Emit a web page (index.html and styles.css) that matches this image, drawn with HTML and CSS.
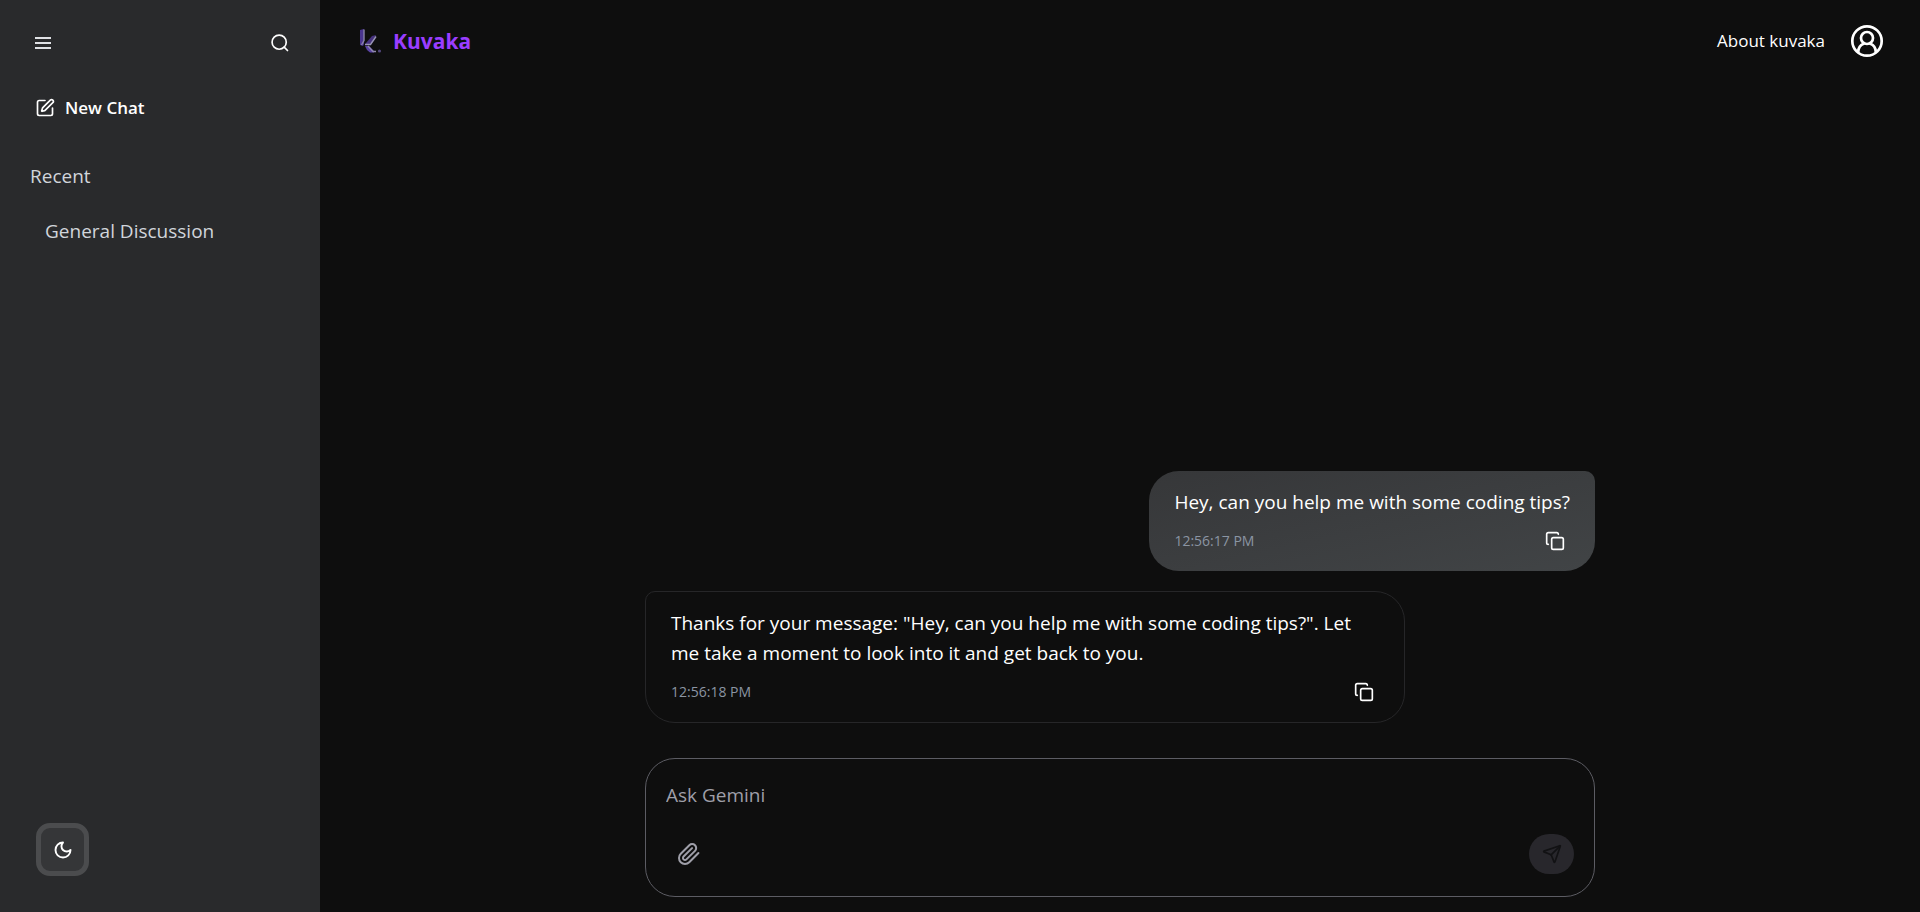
FILE: index.html
```html
<!DOCTYPE html>
<html lang="en">
<head>
<meta charset="utf-8">
<meta name="viewport" content="width=device-width, initial-scale=1">
<title>Kuvaka</title>
<link rel="stylesheet" href="styles.css">
</head>
<body class="app">
<aside class="sidebar">
  <div class="sidebar-top">
    <button class="icon-button" type="button" aria-label="Toggle menu">
      <svg width="22" height="22" viewBox="0 0 22 22" fill="none" stroke="#dfe1e5" stroke-width="2"><path d="M3 6h16M3 11h16M3 16h16"/></svg>
    </button>
    <button class="icon-button" type="button" aria-label="Search">
      <svg class="line" width="20" height="20" viewBox="0 0 24 24" stroke-width="2"><circle cx="11" cy="11" r="8.500"/><path d="m21 21-4-4"/></svg>
    </button>
  </div>
  <button class="new-chat" type="button">
    <svg class="line" width="20" height="20" viewBox="0 0 24 24" stroke-width="2"><path d="M12 3H5a2 2 0 0 0-2 2v14a2 2 0 0 0 2 2h14a2 2 0 0 0 2-2v-7"/><path d="M18.375 2.625a1 1 0 0 1 3 3l-9.013 9.014a2 2 0 0 1-.853.505l-2.873.84a.5.500 0 0 1-.62-.62l.84-2.873a2 2 0 0 1 .506-.852z"/></svg>
    New Chat
  </button>
  <h2 class="recent-title">Recent</h2>
  <nav class="recent-list">
    <a class="recent-link" href="#general">General Discussion</a>
  </nav>
  <button class="theme-button" type="button" aria-label="Switch theme">
    <svg class="line" width="20" height="20" viewBox="0 0 24 24" stroke-width="2.300"><path d="M12 3a6 6 0 0 0 9 9 9 9 0 1 1-9-9Z"/></svg>
  </button>
</aside>
<main class="main">
  <header class="header">
    <a class="brand" href="#home">
      <svg width="24" height="26" viewBox="0 0 24 26" aria-hidden="true">
        <path d="M1 2l4-1v15l-1 2-3-1z" fill="#4a3590"/>
        <path d="M5 1.500v11L2.500 17" fill="none" stroke="#8a84a8" stroke-width="1.400"/>
        <path d="M7 15l6-7 4-1-5 8-3 2H6z" fill="#46327f"/>
        <path d="M6 16.500h5.500L17 8.500" fill="none" stroke="#9a94b8" stroke-width="1.500"/>
        <path d="M6 18h4l5 5v1.500h-4L8 22z" fill="#5a43a5"/>
        <path d="M9 18l5 5.500h3" fill="none" stroke="#8f89ac" stroke-width="1.300"/>
        <circle cx="20.500" cy="23" r="1.600" fill="#51467a"/>
      </svg>
      <span>Kuvaka</span>
    </a>
    <div class="header-links">
      <a class="about" href="#about">About kuvaka</a>
      <button class="icon-button" type="button" aria-label="Account">
        <svg class="line" width="36" height="36" viewBox="0 0 24 24" stroke-width="1.800"><circle cx="12" cy="12" r="9.800"/><circle cx="12" cy="10" r="4"/><path d="M6.200 19.300V19a5.800 5.800 0 0 1 3.500-5.200M17.800 19.300V19a5.800 5.800 0 0 0-3.500-5.200"/></svg>
      </button>
    </div>
  </header>
  <section class="chat">
    <div class="messages">
      <article class="bubble bubble-user">
        <p class="text">Hey, can you help me with some coding tips?</p>
        <div class="meta">
          <time>12:56:17 PM</time>
          <button class="icon-button copy" type="button" aria-label="Copy message">
            <svg class="line" width="20" height="20" viewBox="0 0 24 24" stroke-width="2"><rect x="8" y="8" width="14" height="14" rx="2"/><path d="M4 16c-1.100 0-2-.9-2-2V4c0-1.100.9-2 2-2h10c1.100 0 2 .9 2 2"/></svg>
          </button>
        </div>
      </article>
      <article class="bubble bubble-bot">
        <p class="text">Thanks for your message: "Hey, can you help me with some coding tips?". Let me take a moment to look into it and get back to you.</p>
        <div class="meta">
          <time>12:56:18 PM</time>
          <button class="icon-button copy" type="button" aria-label="Copy message">
            <svg class="line" width="20" height="20" viewBox="0 0 24 24" stroke-width="2"><rect x="8" y="8" width="14" height="14" rx="2"/><path d="M4 16c-1.100 0-2-.9-2-2V4c0-1.100.9-2 2-2h10c1.100 0 2 .9 2 2"/></svg>
          </button>
        </div>
      </article>
    </div>
    <form class="composer">
      <input class="prompt" type="text" placeholder="Ask Gemini" aria-label="Ask Gemini">
      <div class="composer-actions">
        <button class="icon-button attach" type="button" aria-label="Attach file">
          <svg class="line" width="24" height="24" viewBox="0 0 24 24" stroke-width="2"><path d="m21.440 11.050-9.190 9.190a6 6 0 0 1-8.490-8.490l8.570-8.570A4 4 0 1 1 18 8.840l-8.590 8.570a2 2 0 0 1-2.830-2.830l8.490-8.480"/></svg>
        </button>
        <button class="send" type="submit" aria-label="Send" disabled>
          <svg class="line" width="20" height="20" viewBox="0 0 24 24" stroke-width="2"><path d="M14.536 21.686a.5.500 0 0 0 .937-.024l6.500-19a.496.496 0 0 0-.635-.635l-19 6.500a.5.500 0 0 0-.024.937l7.930 3.180a2 2 0 0 1 1.112 1.110z"/><path d="m21.854 2.147-10.940 10.939"/></svg>
        </button>
      </div>
    </form>
  </section>
</main>
</body>
</html>
```
FILE: styles.css
```css
* {
  box-sizing: border-box;
}

.app {
  display: flex;
  min-height: 100vh;
  margin: 0;
  background: #0e0e0e;
  color: #ffffff;
  font-family: "Segoe UI", "Open Sans", "Noto Sans", sans-serif;
  font-size: 19px;
  line-height: 30px;
}

button {
  padding: 0;
  border: 0;
  background: none;
  color: inherit;
  font: inherit;
  cursor: pointer;
}

a {
  color: inherit;
  text-decoration: none;
}

svg {
  display: block;
  flex: none;
}

.line {
  fill: none;
  stroke: currentColor;
  stroke-linecap: round;
  stroke-linejoin: round;
}

.icon-button {
  display: flex;
  align-items: center;
  justify-content: center;
}

.sidebar {
  display: flex;
  flex: none;
  flex-direction: column;
  align-items: stretch;
  width: 320px;
  padding: 32px 30px 36px;
  background: #292a2c;
}

.sidebar-top {
  display: flex;
  align-items: center;
  justify-content: space-between;
  height: 22px;
  padding: 0 0 0 2px;
}

.new-chat {
  display: flex;
  align-items: center;
  gap: 10px;
  margin-top: 39px;
  padding-left: 5px;
  font-size: 17px;
  font-weight: 600;
}

.recent-title {
  margin: 38px 0 0;
  color: #d1d5db;
  font-size: 19px;
  font-weight: 400;
}

.recent-list {
  margin-top: 25px;
  padding-left: 15px;
  color: #d1d5db;
}

.theme-button {
  display: flex;
  align-items: center;
  justify-content: center;
  width: 53px;
  height: 53px;
  margin: auto 0 0 6px;
  border: 5px solid #4b4c4e;
  border-radius: 14px;
  background: #353638;
}

.main {
  display: flex;
  flex: 1;
  flex-direction: column;
  min-width: 0;
}

.header {
  display: flex;
  align-items: center;
  justify-content: space-between;
  padding: 23px 35px 0 39px;
}

.brand {
  display: flex;
  align-items: center;
  gap: 10px;
  color: #9a3dff;
  font-size: 21px;
  font-weight: 700;
}

.header-links {
  display: flex;
  align-items: center;
  gap: 24px;
}

.about {
  font-size: 17px;
}

.chat {
  display: flex;
  flex: 1;
  flex-direction: column;
  justify-content: flex-end;
  gap: 35px;
  width: 100%;
  max-width: 950px;
  margin: 0 auto;
  padding-bottom: 15px;
}

.messages {
  display: flex;
  flex-direction: column;
  gap: 20px;
}

.bubble {
  max-width: 80%;
  border-radius: 30px;
}

.bubble-user {
  align-self: flex-end;
  padding: 16px 25px 15px;
  border-top-right-radius: 10px;
  background: linear-gradient(to bottom right, #363739, #414446);
}

.bubble-bot {
  align-self: flex-start;
  padding: 16px 25px 15px;
  border: 1px solid #262628;
  border-top-left-radius: 10px;
}

.text {
  margin: 0 0 9px;
}

.meta {
  display: flex;
  align-items: center;
  justify-content: space-between;
  color: #8b95a3;
  font-size: 14px;
}

.copy {
  width: 30px;
  height: 30px;
  color: #ffffff;
}

.composer {
  display: flex;
  flex-direction: column;
  gap: 23px;
  padding: 20px 20px 22px;
  border: 1px solid #5c5c63;
  border-radius: 30px;
}

.prompt {
  width: 100%;
  height: 32px;
  padding: 0;
  border: 0;
  outline: 0;
  background: transparent;
  color: #ffffff;
  font: inherit;
}

.prompt::placeholder {
  color: #9f9fa9;
  opacity: 1;
}

.composer-actions {
  display: flex;
  align-items: center;
  justify-content: space-between;
}

.attach {
  width: 46px;
  height: 40px;
  color: #9f9fa9;
}

.send {
  display: flex;
  align-items: center;
  justify-content: center;
  width: 45px;
  height: 40px;
  border-radius: 20px;
  background: #28272c;
  color: #121214;
}
```
